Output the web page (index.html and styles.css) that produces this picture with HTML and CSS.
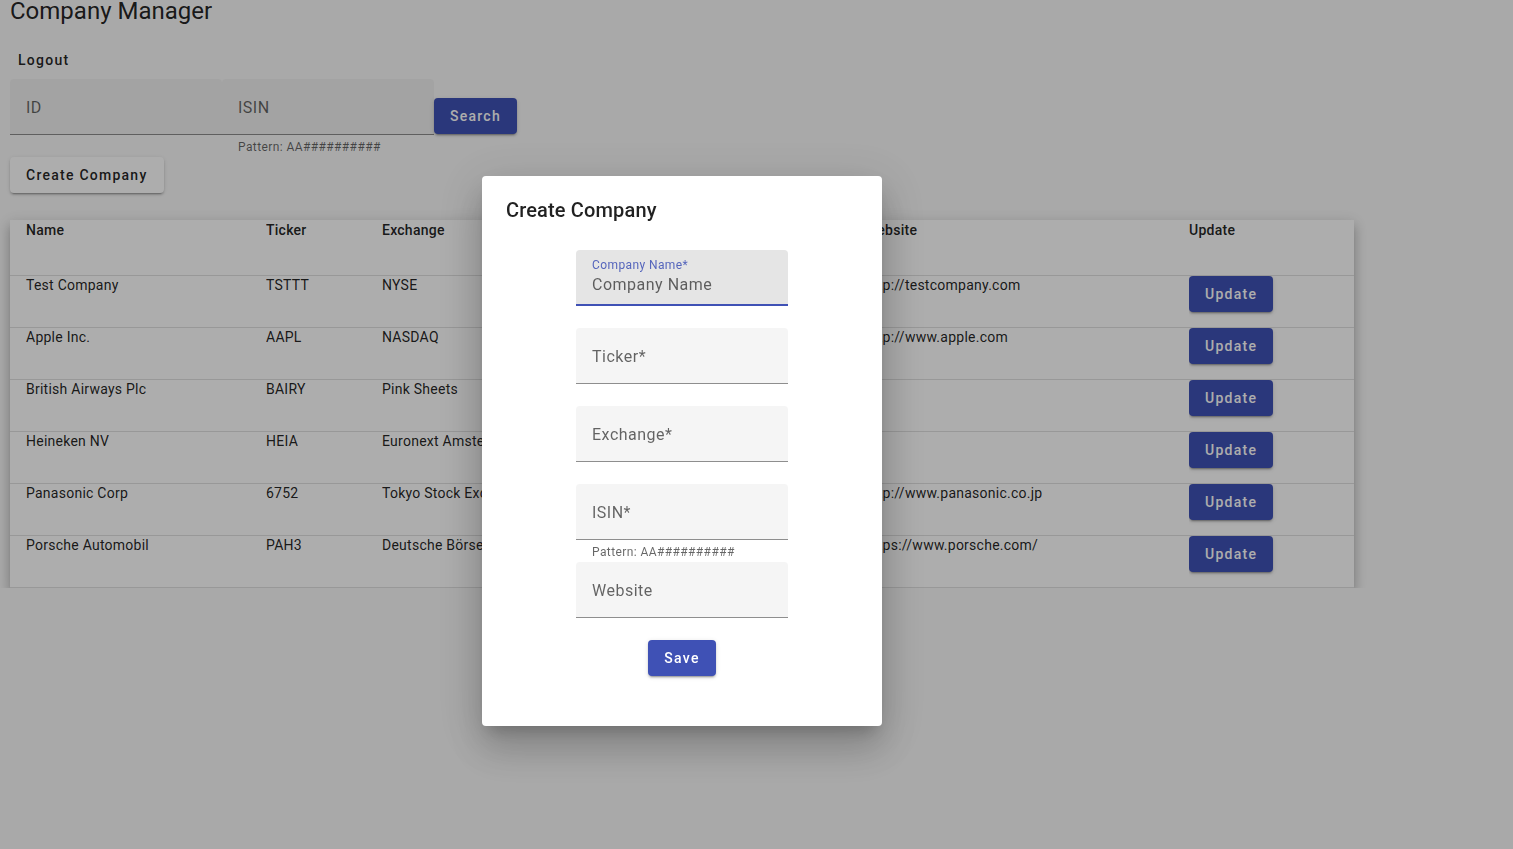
FILE: index.html
```html
<!DOCTYPE html>
<html lang="en">
<head>
<meta charset="utf-8">
<title>Company Manager</title>
<link rel="stylesheet" href="styles.css">
</head>
<body>
<div class="page">
  <h1 class="title">Company Manager</h1>
  <div class="nav"><button class="btn btn-text">Logout</button></div>
  <form class="search">
    <div class="field">
      <div class="field-box">ID</div>
      <div class="field-hint"></div>
    </div>
    <div class="field">
      <div class="field-box">ISIN</div>
      <div class="field-hint">Pattern: AA##########</div>
    </div>
    <button type="button" class="btn btn-raised btn-primary search-btn">Search</button>
  </form>
  <div class="create-row"><button class="btn btn-raised btn-basic">Create Company</button></div>

  <div class="table">
    <div class="row head">
      <div class="cell">Name</div><div class="cell">Ticker</div><div class="cell">Exchange</div><div class="cell"></div><div class="cell">Website</div><div class="cell">Update</div>
    </div>
    <div class="row">
      <div class="cell">Test Company</div><div class="cell">TSTTT</div><div class="cell">NYSE</div><div class="cell"></div><div class="cell">http://testcompany.com</div><div class="cell"><button class="btn btn-raised btn-primary">Update</button></div>
    </div>
    <div class="row">
      <div class="cell">Apple Inc.</div><div class="cell">AAPL</div><div class="cell">NASDAQ</div><div class="cell"></div><div class="cell">http://www.apple.com</div><div class="cell"><button class="btn btn-raised btn-primary">Update</button></div>
    </div>
    <div class="row">
      <div class="cell">British Airways Plc</div><div class="cell">BAIRY</div><div class="cell">Pink Sheets</div><div class="cell"></div><div class="cell"></div><div class="cell"><button class="btn btn-raised btn-primary">Update</button></div>
    </div>
    <div class="row">
      <div class="cell">Heineken NV</div><div class="cell">HEIA</div><div class="cell">Euronext Amsterdam</div><div class="cell"></div><div class="cell"></div><div class="cell"><button class="btn btn-raised btn-primary">Update</button></div>
    </div>
    <div class="row">
      <div class="cell">Panasonic Corp</div><div class="cell">6752</div><div class="cell">Tokyo Stock Exchange</div><div class="cell"></div><div class="cell">http://www.panasonic.co.jp</div><div class="cell"><button class="btn btn-raised btn-primary">Update</button></div>
    </div>
    <div class="row">
      <div class="cell">Porsche Automobil</div><div class="cell">PAH3</div><div class="cell">Deutsche Börse</div><div class="cell"></div><div class="cell">https://www.porsche.com/</div><div class="cell"><button class="btn btn-raised btn-primary">Update</button></div>
    </div>
  </div>
</div>

<div class="backdrop"></div>
<div class="dialog">
  <h2 class="dialog-title">Create Company</h2>
  <form class="dialog-form">
    <div class="field">
      <div class="field-box focused">
        <span class="float-label">Company Name*</span>
        <span class="placeholder">Company Name</span>
      </div>
      <div class="field-hint"></div>
    </div>
    <div class="field">
      <div class="field-box light">Ticker*</div>
      <div class="field-hint"></div>
    </div>
    <div class="field">
      <div class="field-box light">Exchange*</div>
      <div class="field-hint"></div>
    </div>
    <div class="field">
      <div class="field-box light">ISIN*</div>
      <div class="field-hint">Pattern: AA##########</div>
    </div>
    <div class="field">
      <div class="field-box light">Website</div>
      <div class="field-hint"></div>
    </div>
    <button type="button" class="btn btn-raised btn-primary save-btn">Save</button>
  </form>
</div>
</body>
</html>
```
FILE: styles.css
```css
* { box-sizing: border-box; }
html, body { margin: 0; padding: 0; }
body {
  background: #fafafa;
  font-family: Roboto, "Liberation Sans", sans-serif;
  color: rgba(0,0,0,.87);
  font-size: 14px;
}
.page { padding: 0 10px; }
.title {
  margin: 0;
  font-size: 24px;
  font-weight: 400;
  line-height: 22px;
  color: rgba(0,0,0,.87);
}
.nav { margin-top: 20px; }

.btn {
  font-family: Roboto, "Liberation Sans", sans-serif;
  font-size: 14px;
  font-weight: 500;
  letter-spacing: 1.25px;
  height: 36px;
  border: none;
  border-radius: 4px;
  padding: 0 16px;
  line-height: 36px;
  cursor: pointer;
  display: inline-block;
}
.btn-text { background: transparent; padding: 0 8px; color: rgba(0,0,0,.87); }
.btn-raised {
  box-shadow: 0 3px 1px -2px rgba(0,0,0,.2), 0 2px 2px 0 rgba(0,0,0,.14), 0 1px 5px 0 rgba(0,0,0,.12);
}
.btn-primary { background: #3f51b5; color: #fff; }
.btn-basic { background: #fff; color: rgba(0,0,0,.87); }

.search {
  display: flex;
  align-items: flex-start;
  margin-top: 1px;
}
.search-btn { margin-top: 19px; }

.field { width: 212px; }
.field-box {
  height: 56px;
  background: rgba(0,0,0,.04);
  border-bottom: 1px solid rgba(0,0,0,.42);
  border-radius: 4px 4px 0 0;
  padding: 2px 16px 0;
  display: flex;
  align-items: center;
  font-size: 16px;
  line-height: 24px;
  letter-spacing: .5px;
  color: rgba(0,0,0,.6);
}
.field-box.light { background: #f5f5f5; }
.field-box.focused {
  background: #e5e5e5;
  border-bottom: 2px solid #3f51b5;
  display: block;
  padding-top: 7px;
}
.float-label {
  display: block;
  font-size: 12px;
  line-height: 16px;
  letter-spacing: .4px;
  color: rgba(63,81,181,.87);
}
.placeholder {
  display: block;
  font-size: 16px;
  line-height: 24px;
  letter-spacing: .5px;
  color: rgba(0,0,0,.6);
}
.field-hint {
  height: 22px;
  padding: 3px 16px 0;
  font-size: 12px;
  line-height: 19px;
  letter-spacing: .4px;
  color: rgba(0,0,0,.6);
  white-space: nowrap;
}

.create-row { height: 36px; }

.table {
  margin-top: 27px;
  width: 1344px;
  background: #fff;
  box-shadow: 0 5px 5px -3px rgba(0,0,0,.2), 0 8px 10px 1px rgba(0,0,0,.14), 0 3px 14px 2px rgba(0,0,0,.12);
}
.row {
  display: grid;
  grid-template-columns: 256px 116px 260px 223px 324px 165px;
  height: 52px;
  border-bottom: 1px solid rgba(0,0,0,.12);
  font-size: 14px;
  line-height: 18px;
  letter-spacing: .25px;
}
.row.head { height: 56px; font-weight: 500; line-height: 20px; }
.cell { white-space: nowrap; overflow: hidden; }
.cell:first-child { padding-left: 16px; }

.backdrop {
  position: fixed;
  inset: 0;
  background: rgba(0,0,0,.32);
}
.dialog {
  position: fixed;
  left: 482px;
  top: 176px;
  width: 400px;
  background: #fff;
  border-radius: 4px;
  padding: 24px;
  box-shadow: 0 11px 15px -7px rgba(0,0,0,.2), 0 24px 38px 3px rgba(0,0,0,.14), 0 9px 46px 8px rgba(0,0,0,.12);
}
.dialog-title {
  margin: 0 0 30px;
  font-size: 20px;
  font-weight: 500;
  line-height: 20px;
  letter-spacing: .15px;
  color: rgba(0,0,0,.87);
}
.dialog-form {
  display: flex;
  flex-direction: column;
  align-items: center;
}
.save-btn { margin-bottom: 26px; }
```
